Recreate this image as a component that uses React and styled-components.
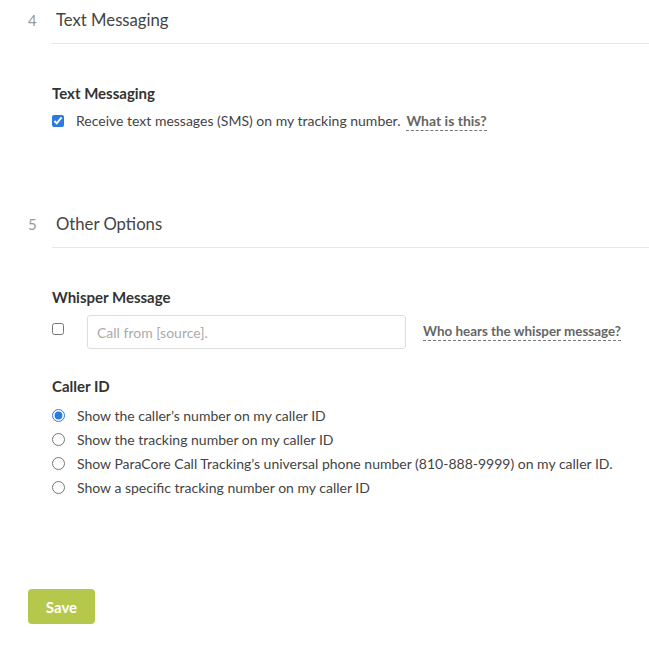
import React from 'react'
import styled, { createGlobalStyle } from 'styled-components'

const Global = createGlobalStyle`
  body {
    margin: 0;
    background: #fff;
    font-family: Lato, "Liberation Sans", sans-serif;
    color: #444;
  }
`

const Page = styled.div`
  width: 649px;
  padding: 0 0 0 28px;
  box-sizing: border-box;
`

const Section = styled.section`
  margin-bottom: ${p => p.$gap || 0}px;
`

const Header = styled.div`
  display: flex;
  align-items: center;
  padding: 8px 0 11px;
`

const Num = styled.span`
  width: 24px;
  font-size: 15px;
  color: #999;
`

const HeaderTitle = styled.h2`
  margin: 0;
  padding-left: 4px;
  font-size: 16.7px;
  line-height: 24px;
  font-weight: 400;
  color: #444;
`

const Divider = styled.div`
  margin-left: 24px;
  height: 1px;
  background: #e6e6e6;
`

const Body = styled.div`
  padding-left: 24px;
  padding-top: 39px;
`

const Label = styled.div`
  font-size: 15px;
  line-height: 20px;
  font-weight: 700;
  color: #333;
  margin-bottom: ${p => p.$mb || 8}px;
`

const CheckRow = styled.label`
  display: flex;
  align-items: center;
  gap: 12px;
  font-size: 14px;
  line-height: 20px;
  color: #444;
`

const Box = styled.input`
  margin: 0;
  width: 12px;
  height: 12px;
  accent-color: #2a7ae2;
`

const HelpLink = styled.a`
  margin-left: 6px;
  color: #666;
  font-weight: 700;
  text-decoration: none;
  border-bottom: 1px dashed #777;
  padding-bottom: 1px;
  cursor: help;
`

const WhisperRow = styled.div`
  display: flex;
  align-items: center;
  margin-bottom: 27px;
`

const WhisperBox = styled(Box)`
  margin-top: -6px;
  margin-right: 23px;
`

const TextInput = styled.input`
  width: 319px;
  height: 34px;
  box-sizing: border-box;
  border: 1px solid #ddd;
  border-radius: 3px;
  padding: 0 9px;
  font-family: inherit;
  font-size: 14px;
  color: #444;
  &::placeholder {
    color: #aaa;
  }
`

const WhisperLink = styled(HelpLink)`
  margin-left: 17px;
  font-size: 13.4px;
`

const RadioList = styled.div`
  display: flex;
  flex-direction: column;
`

const RadioRow = styled.label`
  display: flex;
  align-items: center;
  gap: 12px;
  height: 24px;
  font-size: 14px;
  color: #444;
`

const Radio = styled.input`
  margin: 0;
  width: 13px;
  height: 13px;
  accent-color: #2a7ae2;
`

const SaveButton = styled.button`
  margin-top: 90px;
  width: 67px;
  height: 35px;
  border: none;
  border-radius: 4px;
  background: #b6c84b;
  color: #fff;
  font-family: inherit;
  font-size: 15px;
  font-weight: 700;
`

const callerOptions = [
  'Show the caller\u2019s number on my caller ID',
  'Show the tracking number on my caller ID',
  'Show ParaCore Call Tracking\u2019s universal phone number (810-888-9999) on my caller ID.',
  'Show a specific tracking number on my caller ID'
]

const App = () => {
  return (
    <Page>
      <Global />
      <Section $gap={73}>
        <Header>
          <Num>4</Num>
          <HeaderTitle>Text Messaging</HeaderTitle>
        </Header>
        <Divider />
        <Body>
          <Label>Text Messaging</Label>
          <CheckRow>
            <Box type='checkbox' defaultChecked />
            <span>
              Receive text messages (SMS) on my tracking number.
              <HelpLink>What is this?</HelpLink>
            </span>
          </CheckRow>
        </Body>
      </Section>

      <Section>
        <Header>
          <Num>5</Num>
          <HeaderTitle>Other Options</HeaderTitle>
        </Header>
        <Divider />
        <Body>
          <Label>Whisper Message</Label>
          <WhisperRow>
            <WhisperBox type='checkbox' />
            <TextInput placeholder='Call from [source].' />
            <WhisperLink>Who hears the whisper message?</WhisperLink>
          </WhisperRow>
          <Label $mb={7}>Caller ID</Label>
          <RadioList>
            {callerOptions.map((opt, i) => (
              <RadioRow key={i}>
                <Radio type='radio' name='callerid' defaultChecked={i === 0} />
                {opt}
              </RadioRow>
            ))}
          </RadioList>
        </Body>
      </Section>

      <SaveButton>Save</SaveButton>
    </Page>
  )
}

export default App
